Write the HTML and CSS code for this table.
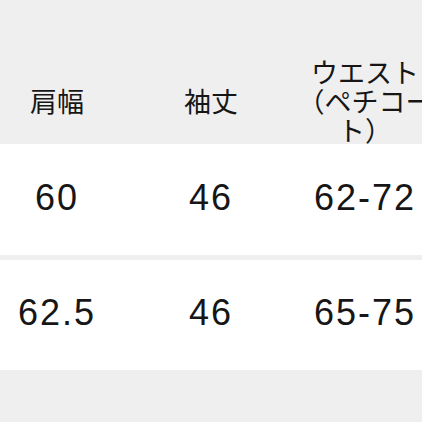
FILE: index.html
```html
<!DOCTYPE html>
<html lang="ja">
<head>
<meta charset="utf-8">
<link rel="stylesheet" href="styles.css">
</head>
<body>
<div class="sheet">
  <div class="row head">
    <div class="cell">肩幅</div>
    <div class="cell">袖丈</div>
    <div class="cell">ウエスト（ペチコート）</div>
  </div>
  <div class="row data first">
    <div class="cell">60</div>
    <div class="cell">46</div>
    <div class="cell">62-72</div>
  </div>
  <div class="row data second">
    <div class="cell">62.5</div>
    <div class="cell">46</div>
    <div class="cell">65-75</div>
  </div>
</div>
</body>
</html>
```
FILE: styles.css
```css
html, body {
  margin: 0;
  padding: 0;
  background: #efefef;
  overflow: hidden;
}
.sheet {
  width: 462px;
  margin-left: -20px;
  display: flex;
  flex-direction: column;
}
.row {
  display: grid;
  grid-template-columns: 154px 154px 154px;
}
.cell {
  text-align: center;
  padding: 0 6px;
  color: #161616;
}
.head {
  height: 144px;
  box-sizing: border-box;
  padding-top: 57px;
  align-items: center;
  font-family: "Noto Sans CJK JP", sans-serif;
  font-size: 27px;
  line-height: 29px;
  background: #efefef;
}
.data {
  background: #fff;
  align-items: center;
  box-sizing: border-box;
  padding-bottom: 4px;
  font-family: "Liberation Sans", Arial, sans-serif;
  font-size: 36px;
  letter-spacing: 2px;
}
.first {
  height: 111px;
}
.second {
  height: 110px;
  margin-top: 5px;
}
```
